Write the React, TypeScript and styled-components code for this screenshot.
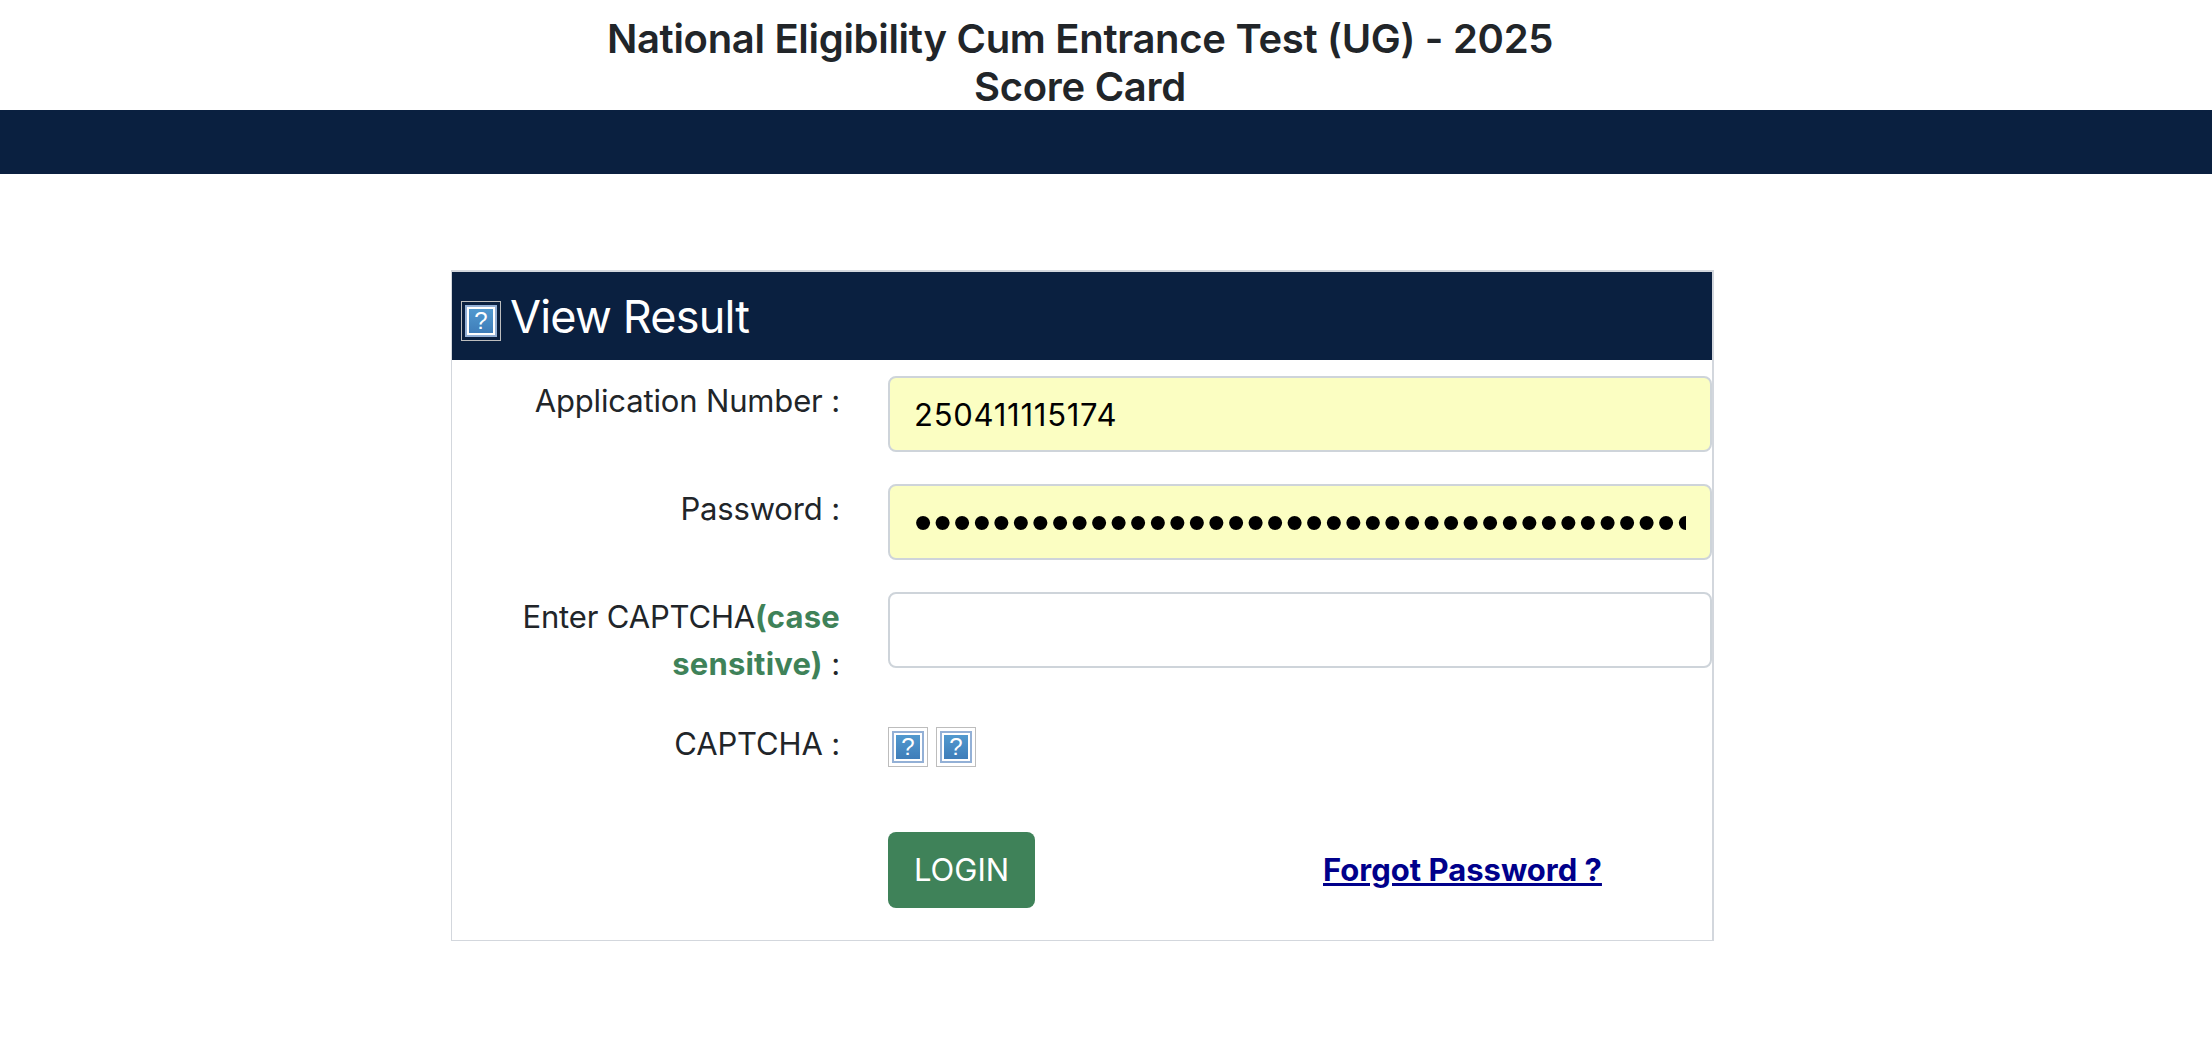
import { createGlobalStyle } from "styled-components";
import styled from "styled-components";

const GlobalStyle = createGlobalStyle`
    html, body {
        margin: 0;
        padding: 0;
        background: #fff;
    }

    body {
        font-family: Inter, "Liberation Sans", sans-serif;
        color: #212529;
    }

    * {
        box-sizing: border-box;
    }
`;

const PlaceholderIcon = () => (
    <IconFrame viewBox="0 0 40 40" aria-hidden="true">
        <defs>
            <linearGradient id="iconFill" x1="0" y1="0" x2="0" y2="1">
                <stop offset="0" stopColor="#5199cf" />
                <stop offset="1" stopColor="#3f7db9" />
            </linearGradient>
        </defs>
        <rect x="0.5" y="0.5" width="39" height="39" fill="none" stroke="#bdbdbd" />
        <rect x="4" y="4" width="32" height="32" fill="#93b0d6" />
        <rect x="6" y="6" width="28" height="28" fill="#fff" />
        <rect x="8" y="8" width="24" height="24" fill="url(#iconFill)" />
        <text x="20" y="28" textAnchor="middle" fontFamily="Liberation Sans, sans-serif" fontSize="24" fontWeight="400" fill="#fff">
            ?
        </text>
    </IconFrame>
);

export default function App() {
    return (
        <>
            <GlobalStyle />
            <Title>
                National Eligibility Cum Entrance Test (UG) - 2025
                <br />
                Score Card
            </Title>
            <Band />
            <Card>
                <CardHeader>
                    <PlaceholderIcon />
                    <CardTitle>View Result</CardTitle>
                </CardHeader>
                <Form onSubmit={(e) => e.preventDefault()}>
                    <Label htmlFor="application">Application Number :</Label>
                    <Input id="application" type="text" $filled defaultValue="250411115174" />

                    <Label htmlFor="password">Password :</Label>
                    <PasswordInput id="password" type="password" $filled defaultValue={"x".repeat(60)} />

                    <Label htmlFor="captcha">
                        Enter CAPTCHA<Hint>(case sensitive)</Hint> :
                    </Label>
                    <Input id="captcha" type="text" />

                    <Label as="span">CAPTCHA :</Label>
                    <CaptchaImages>
                        <PlaceholderIcon />
                        <PlaceholderIcon />
                    </CaptchaImages>

                    <span />
                    <Actions>
                        <LoginButton type="submit">LOGIN</LoginButton>
                        <ForgotLink href="#">Forgot Password ?</ForgotLink>
                    </Actions>
                </Form>
            </Card>
        </>
    );
}

const Title = styled.h2`
    margin: 0;
    padding: 15px 52px 0 0;
    height: 110px;
    text-align: center;
    font-size: 40px;
    line-height: 48px;
    font-weight: 600;
    letter-spacing: -0.3px;
    color: #212529;
`;

const Band = styled.div`
    height: 64px;
    background: #0a2040;
`;

const Card = styled.section`
    width: 1263px;
    margin: 96px 0 0 451px;
    border: 1px solid #d3d7dd;
    border-top-width: 2px;
    border-right-width: 2px;
    padding-bottom: 32px;
`;

const CardHeader = styled.div`
    display: flex;
    align-items: center;
    gap: 9px;
    height: 88px;
    padding: 10px 0 0 9px;
    background: #0a2040;
`;

const CardTitle = styled.h3`
    margin: 0 0 8px;
    font-size: 45px;
    line-height: 54px;
    font-weight: 400;
    letter-spacing: -0.8px;
    color: #fff;
`;

const IconFrame = styled.svg`
    display: block;
    width: 40px;
    height: 40px;
    flex: none;
`;

const Form = styled.form`
    display: grid;
    grid-template-columns: 436px 1fr;
    row-gap: 32px;
    padding-top: 16px;
`;

const Label = styled.label`
    padding: 2px 48px 0 50px;
    text-align: right;
    font-size: 31px;
    line-height: 46.5px;
    font-weight: 400;
    letter-spacing: -0.15px;
    color: #212529;
`;

const Hint = styled.strong`
    font-weight: 700;
    letter-spacing: 0.2px;
    color: #3f8259;
`;

const Input = styled.input<{ $filled?: boolean }>`
    display: block;
    width: 100%;
    height: 76px;
    padding: 0 24px;
    border: 2px solid #ced4da;
    border-radius: 8px;
    outline: none;
    background: ${(props) => (props.$filled ? "#fbfec2" : "#fff")};
    font-family: Inter, "Liberation Sans", sans-serif;
    font-size: 31px;
    letter-spacing: 0.75px;
    color: #000;
`;

const PasswordInput = styled(Input)`
    font-family: "Liberation Sans", sans-serif;
    font-size: 52px;
    letter-spacing: 1.35px;
`;

const CaptchaImages = styled.div`
    display: flex;
    gap: 8px;
    padding-top: 8px;
`;

const Actions = styled.div`
    display: flex;
    align-items: center;
    height: 76px;
    margin-top: 32px;
`;

const LoginButton = styled.button`
    width: 147px;
    height: 76px;
    border: none;
    border-radius: 8px;
    background: #3f8259;
    font-family: Inter, "Liberation Sans", sans-serif;
    font-size: 31px;
    color: #fff;
    cursor: pointer;
`;

const ForgotLink = styled.a`
    margin-left: 288px;
    font-size: 31px;
    font-weight: 700;
    color: #00008b;
    text-decoration: underline;
`;
